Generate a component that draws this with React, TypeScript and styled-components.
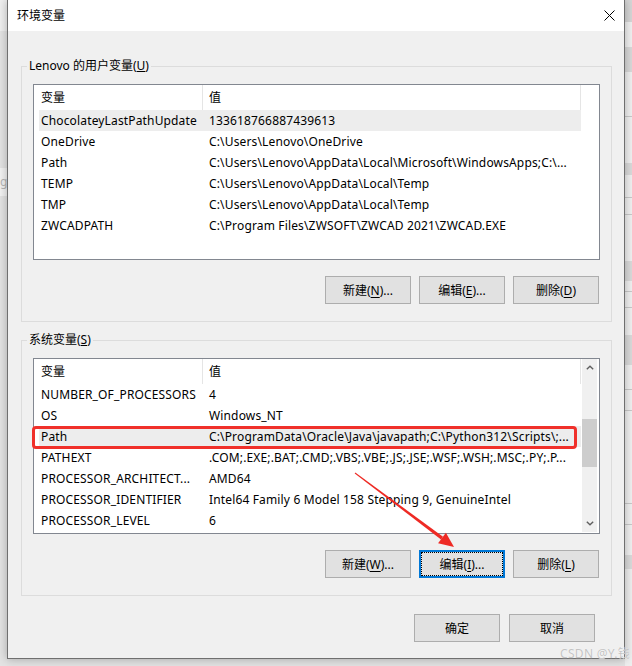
import React from "react";
import styled, { createGlobalStyle } from "styled-components";

const Global = createGlobalStyle`
  html, body { margin: 0; padding: 0; }
  body {
    font-family: "Noto Sans", "Noto Sans CJK SC", sans-serif;
    font-size: 12px;
    color: #000;
    background: #e2e2e2;
  }
`;

const Page = styled.div`
  position: relative;
  display: flex;
  width: 632px;
  height: 666px;
  overflow: hidden;
`;

const Strip = styled.div`
  flex: 0 0 7px;
  display: flex;
  flex-direction: column;
  background: #e4e4e4;
  overflow: hidden;
`;

const Band = styled.div<{ $h: number; $c: string; $line?: boolean }>`
  flex: 0 0 ${(p) => p.$h}px;
  background: ${(p) => p.$c};
  border-bottom: ${(p) => (p.$line ? "1px solid #c9c9c9" : "none")};
  color: #b5b5b5;
  font-size: 12px;
  line-height: ${(p) => p.$h}px;
  white-space: nowrap;
`;

const Dialog = styled.div`
  position: relative;
  z-index: 1;
  flex: 0 0 618px;
  height: 659px;
  box-sizing: border-box;
  border: 1px solid #6f6f6f;
  border-top: none;
  background: #f0f0f0;
  box-shadow: 0 0 9px rgba(0, 0, 0, 0.28);
  display: flex;
  flex-direction: column;
`;

const TitleBar = styled.div`
  flex: 0 0 31px;
  display: flex;
  align-items: center;
  justify-content: space-between;
  background: #fff;
  padding-left: 9px;
`;

const TitleText = styled.div`
  font-size: 12px;
  line-height: 16px;
`;

const CloseButton = styled.div`
  width: 29px;
  height: 31px;
  display: flex;
  align-items: center;
  justify-content: center;
`;

const Body = styled.div`
  display: flex;
  flex-direction: column;
  padding: 27px 12px 0 13px;
`;

const Group = styled.fieldset`
  margin: 0;
  padding: 10px 11px 17px;
  border: 1px solid #dcdcdc;
  min-width: 0;
  & + & {
    margin-top: 10px;
  }
`;

const Legend = styled.legend`
  padding: 0 2px;
  margin-left: -6px;
  font-size: 12px;
  line-height: 16px;
`;

const ListView = styled.div`
  height: 176px;
  box-sizing: border-box;
  border: 1px solid #828790;
  background: #fff;
  display: flex;
`;

const ListMain = styled.div`
  flex: 1;
  display: flex;
  flex-direction: column;
`;

const HeaderRow = styled.div`
  display: flex;
  height: 25px;
`;

const HeaderCell = styled.div<{ $w: number; $pad: number }>`
  flex: 0 0 ${(p) => p.$w}px;
  box-sizing: border-box;
  padding-left: ${(p) => p.$pad}px;
  border-right: 1px solid #e5e5e5;
  line-height: 25px;
`;

const Row = styled.div<{ $selected?: boolean; $marked?: boolean }>`
  position: relative;
  display: flex;
  height: 21px;
  width: 542px;
  margin-left: 5px;
  background: ${(p) => (p.$selected ? "#ededed" : "transparent")};
  ${(p) =>
    p.$marked
      ? `&::after {
    content: "";
    position: absolute;
    left: -7px;
    right: 4px;
    top: 0;
    bottom: -2px;
    border: 3px solid #f0302a;
    border-radius: 4px;
  }`
      : ""}
`;

const Cell = styled.div<{ $w: number; $pad: number }>`
  flex: 0 0 ${(p) => p.$w}px;
  box-sizing: border-box;
  padding-left: ${(p) => p.$pad}px;
  line-height: 21px;
  letter-spacing: 0.15px;
  white-space: nowrap;
  overflow: hidden;
`;

const ScrollBar = styled.div<{ $visible: boolean }>`
  flex: 0 0 15px;
  margin-right: 2px;
  display: flex;
  flex-direction: column;
  background: ${(p) => (p.$visible ? "#f0f0f0" : "#fff")};
  margin-bottom: 1px;
`;

const ScrollArrow = styled.div`
  flex: 0 0 17px;
  display: flex;
  align-items: center;
  justify-content: center;
`;

const ScrollTrack = styled.div`
  flex: 1;
  display: flex;
  flex-direction: column;
`;

const Thumb = styled.div<{ $top: number; $h: number }>`
  margin-top: ${(p) => p.$top}px;
  height: ${(p) => p.$h}px;
  background: #cdcdcd;
`;

const ButtonRow = styled.div`
  display: flex;
  justify-content: flex-end;
  gap: 8px;
  margin-top: 16px;
  padding-right: 1px;
`;

const Button = styled.button<{ $focused?: boolean }>`
  width: 86px;
  height: 28px;
  box-sizing: border-box;
  padding: 0;
  margin: 0;
  border: ${(p) => (p.$focused ? "2px solid #0078d7" : "1px solid #adadad")};
  background: #e1e1e1;
  font-family: "Noto Sans", "Noto Sans CJK SC", sans-serif;
  font-size: 12px;
  color: #000;
  outline: ${(p) => (p.$focused ? "1px dotted #000" : "none")};
  outline-offset: -3px;
  u {
    text-decoration: underline;
    text-underline-offset: 2px;
  }
`;

const Footer = styled.div`
  display: flex;
  justify-content: flex-end;
  gap: 9px;
  padding: 18px 29px 0 0;
`;

const Overlay = styled.svg`
  position: absolute;
  left: 0;
  top: 0;
  z-index: 5;
  pointer-events: none;
`;

const Watermark = styled.div`
  position: absolute;
  right: 2px;
  bottom: 5px;
  z-index: 6;
  font-size: 12px;
  line-height: 14px;
  color: #c4c4c4;
  letter-spacing: 0.3px;
  text-shadow: 0 0 1px #fff;
`;

type Item = { name: string; value: string; selected?: boolean; marked?: boolean };

const userVars: Item[] = [
  { name: "ChocolateyLastPathUpdate", value: "133618766887439613", selected: true },
  { name: "OneDrive", value: "C:\\Users\\Lenovo\\OneDrive" },
  { name: "Path", value: "C:\\Users\\Lenovo\\AppData\\Local\\Microsoft\\WindowsApps;C:\\..." },
  { name: "TEMP", value: "C:\\Users\\Lenovo\\AppData\\Local\\Temp" },
  { name: "TMP", value: "C:\\Users\\Lenovo\\AppData\\Local\\Temp" },
  { name: "ZWCADPATH", value: "C:\\Program Files\\ZWSOFT\\ZWCAD 2021\\ZWCAD.EXE" },
];

const sysVars: Item[] = [
  { name: "NUMBER_OF_PROCESSORS", value: "4" },
  { name: "OS", value: "Windows_NT" },
  {
    name: "Path",
    value: "C:\\ProgramData\\Oracle\\Java\\javapath;C:\\Python312\\Scripts\\;...",
    selected: true,
    marked: true,
  },
  { name: "PATHEXT", value: ".COM;.EXE;.BAT;.CMD;.VBS;.VBE;.JS;.JSE;.WSF;.WSH;.MSC;.PY;.P..." },
  { name: "PROCESSOR_ARCHITECT...", value: "AMD64" },
  { name: "PROCESSOR_IDENTIFIER", value: "Intel64 Family 6 Model 158 Stepping 9, GenuineIntel" },
  { name: "PROCESSOR_LEVEL", value: "6" },
];

const Chevron = ({ up }: { up: boolean }) => (
  <svg width="8" height="5" viewBox="0 0 8 5">
    <polyline
      points={up ? "0.8,4.2 4,1.2 7.2,4.2" : "0.8,0.8 4,3.8 7.2,0.8"}
      fill="none"
      stroke="#606060"
      strokeWidth="1.4"
    />
  </svg>
);

const List = ({ items, scroll }: { items: Item[]; scroll: boolean }) => (
  <ListView>
    <ListMain>
      <HeaderRow>
        <HeaderCell $w={169} $pad={7}>变量</HeaderCell>
        <HeaderCell $w={378} $pad={6}>值</HeaderCell>
      </HeaderRow>
      {items.map((it) => (
        <Row key={it.name} $selected={it.selected} $marked={it.marked}>
          <Cell $w={164} $pad={2}>{it.name}</Cell>
          <Cell $w={378} $pad={6}>{it.value}</Cell>
        </Row>
      ))}
    </ListMain>
    <ScrollBar $visible={scroll}>
      {scroll && (
        <>
          <ScrollArrow>
            <Chevron up />
          </ScrollArrow>
          <ScrollTrack>
            <Thumb $top={43} $h={48} />
          </ScrollTrack>
          <ScrollArrow>
            <Chevron up={false} />
          </ScrollArrow>
        </>
      )}
    </ScrollBar>
  </ListView>
);

const dir = { x: 0.802, y: 0.597 };
const perp = { x: -0.597, y: 0.802 };
const tip = { x: 454, y: 547 };
const start = { x: 355, y: 473 };
const headLen = 15;
const base = { x: tip.x - dir.x * headLen, y: tip.y - dir.y * headLen };
const pt = (p: { x: number; y: number }, k: number) =>
  `${(p.x + perp.x * k).toFixed(1)},${(p.y + perp.y * k).toFixed(1)}`;
const shaft = [pt(start, 0.5), pt(base, 1.7), pt(base, -1.7), pt(start, -0.5)].join(" ");
const head = [pt(base, 6.5), `${tip.x},${tip.y}`, pt(base, -6.5)].join(" ");

export default function App() {
  return (
    <>
      <Global />
      <Page>
        <Strip>
          <Band $h={31} $c="#efefef" />
          <Band $h={137} $c="#e3e3e3" />
          <Band $h={28} $c="#f2f2f2">g</Band>
          <Band $h={470} $c="#e3e3e3" />
        </Strip>
        <Dialog>
          <TitleBar>
            <TitleText>环境变量</TitleText>
            <CloseButton>
              <svg width="11" height="11" viewBox="0 0 11 11">
                <path d="M0.5 0.5 L10.5 10.5 M10.5 0.5 L0.5 10.5" stroke="#000" strokeWidth="1" />
              </svg>
            </CloseButton>
          </TitleBar>
          <Body>
            <Group>
              <Legend>
                Lenovo 的用户变量(<u>U</u>)
              </Legend>
              <List items={userVars} scroll={false} />
              <ButtonRow>
                <Button>
                  新建(<u>N</u>)...
                </Button>
                <Button>
                  编辑(<u>E</u>)...
                </Button>
                <Button>
                  删除(<u>D</u>)
                </Button>
              </ButtonRow>
            </Group>
            <Group>
              <Legend>
                系统变量(<u>S</u>)
              </Legend>
              <List items={sysVars} scroll />
              <ButtonRow>
                <Button>
                  新建(<u>W</u>)...
                </Button>
                <Button $focused>
                  编辑(<u>I</u>)...
                </Button>
                <Button>
                  删除(<u>L</u>)
                </Button>
              </ButtonRow>
            </Group>
          </Body>
          <Footer>
            <Button>确定</Button>
            <Button>取消</Button>
          </Footer>
        </Dialog>
        <Strip>
          <Band $h={22} $c="#d6d6d6" />
          <Band $h={25} $c="#f0f0f0" />
          <Band $h={25} $c="#d9d9d9" />
          <Band $h={44} $c="#f0f0f0" $line />
          <Band $h={46} $c="#f0f0f0" />
          <Band $h={12} $c="#dadada" />
          <Band $h={22} $c="#f0f0f0" $line />
          <Band $h={16} $c="#f0f0f0" $line />
          <Band $h={46} $c="#f0f0f0" />
          <Band $h={20} $c="#dadada" />
          <Band $h={10} $c="#f0f0f0" $line />
          <Band $h={15} $c="#f0f0f0" $line />
          <Band $h={27} $c="#f0f0f0" />
          <Band $h={30} $c="#dadada" />
          <Band $h={24} $c="#f0f0f0" $line />
          <Band $h={20} $c="#f0f0f0" $line />
          <Band $h={92} $c="#f0f0f0" $line />
          <Band $h={20} $c="#f0f0f0" $line />
          <Band $h={30} $c="#f0f0f0" />
          <Band $h={14} $c="#dadada" />
          <Band $h={100} $c="#eeeeee" />
        </Strip>
        <Overlay width="632" height="666" viewBox="0 0 632 666">
          <polygon points={shaft} fill="#ee2a24" />
          <polygon points={head} fill="#ee2a24" />
        </Overlay>
        <Watermark>CSDN @Y.钱</Watermark>
      </Page>
    </>
  );
}
